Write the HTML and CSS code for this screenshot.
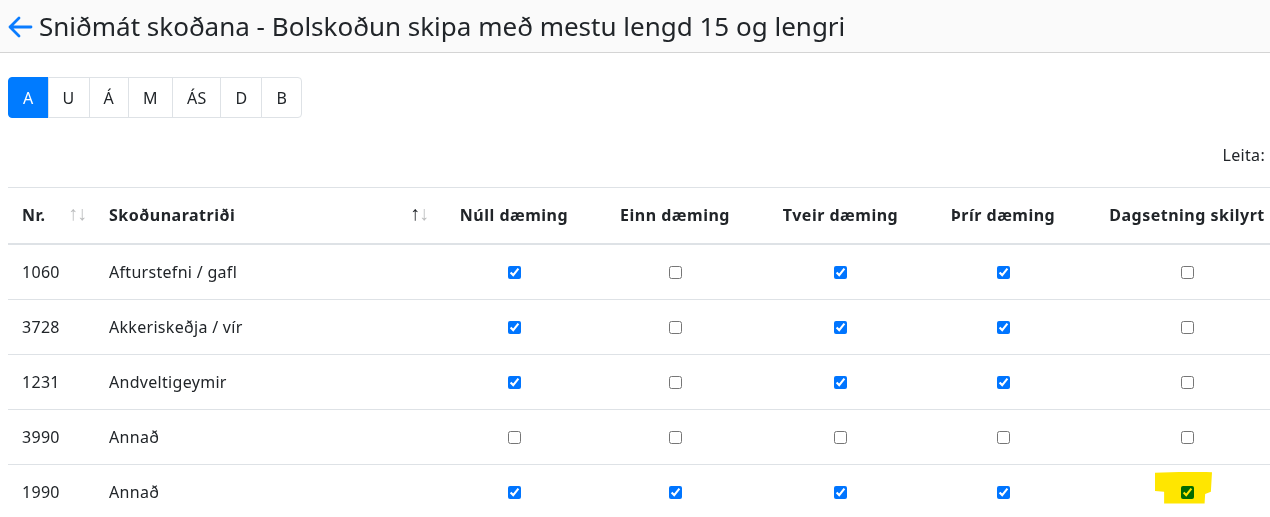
FILE: index.html
```html
<!DOCTYPE html>
<html lang="is">
<head>
<meta charset="utf-8">
<title>Sniðmát skoðana</title>
<link rel="stylesheet" href="styles.css">
</head>
<body>
<header class="topbar">
  <svg class="back" width="26" height="22" viewBox="0 0 26 22" aria-hidden="true">
    <path d="M24 11H3M12 2L3 11l9 9" fill="none" stroke="#0a7cff" stroke-width="2.8" stroke-linecap="round" stroke-linejoin="round"/>
  </svg>
  <h1 class="title">Sniðmát skoðana - Bolskoðun skipa með mestu lengd 15 og lengri</h1>
</header>
<main class="content">
  <div class="btn-group">
    <button class="btn active">A</button>
    <button class="btn">U</button>
    <button class="btn">Á</button>
    <button class="btn">M</button>
    <button class="btn">ÁS</button>
    <button class="btn">D</button>
    <button class="btn">B</button>
  </div>
  <div class="filter">Leita:</div>
  <table class="grid">
    <colgroup>
      <col class="c1"><col class="c2"><col class="c3"><col class="c4"><col class="c5"><col class="c6"><col class="c7">
    </colgroup>
    <thead>
      <tr>
        <th class="sortable">Nr.</th>
        <th class="sortable asc">Skoðunaratriði</th>
        <th class="ctr">Núll dæming</th>
        <th class="ctr">Einn dæming</th>
        <th class="ctr">Tveir dæming</th>
        <th class="ctr">Þrír dæming</th>
        <th class="ctr">Dagsetning skilyrt</th>
      </tr>
    </thead>
    <tbody>
      <tr>
        <td>1060</td><td>Afturstefni / gafl</td>
        <td class="ctr"><input type="checkbox" checked></td>
        <td class="ctr"><input type="checkbox"></td>
        <td class="ctr"><input type="checkbox" checked></td>
        <td class="ctr"><input type="checkbox" checked></td>
        <td class="ctr"><input type="checkbox"></td>
      </tr>
      <tr>
        <td>3728</td><td>Akkeriskeðja / vír</td>
        <td class="ctr"><input type="checkbox" checked></td>
        <td class="ctr"><input type="checkbox"></td>
        <td class="ctr"><input type="checkbox" checked></td>
        <td class="ctr"><input type="checkbox" checked></td>
        <td class="ctr"><input type="checkbox"></td>
      </tr>
      <tr>
        <td>1231</td><td>Andveltigeymir</td>
        <td class="ctr"><input type="checkbox" checked></td>
        <td class="ctr"><input type="checkbox"></td>
        <td class="ctr"><input type="checkbox" checked></td>
        <td class="ctr"><input type="checkbox" checked></td>
        <td class="ctr"><input type="checkbox"></td>
      </tr>
      <tr>
        <td>3990</td><td>Annað</td>
        <td class="ctr"><input type="checkbox"></td>
        <td class="ctr"><input type="checkbox"></td>
        <td class="ctr"><input type="checkbox"></td>
        <td class="ctr"><input type="checkbox"></td>
        <td class="ctr"><input type="checkbox"></td>
      </tr>
      <tr>
        <td>1990</td><td>Annað</td>
        <td class="ctr"><input type="checkbox" checked></td>
        <td class="ctr"><input type="checkbox" checked></td>
        <td class="ctr"><input type="checkbox" checked></td>
        <td class="ctr"><input type="checkbox" checked></td>
        <td class="ctr mark-cell"><input type="checkbox" checked><span class="highlight"></span></td>
      </tr>
    </tbody>
  </table>
</main>
</body>
</html>
```

FILE: styles.css
```css
* { box-sizing: border-box; }
html, body { margin: 0; padding: 0; }
body {
  font-family: "Noto Sans", "Open Sans", sans-serif;
  font-size: 16px;
  line-height: 24px;
  color: #212529;
  background: #fff;
  overflow: hidden;
  letter-spacing: 0.3px;
}
.topbar {
  height: 53px;
  background: #fafafa;
  border-bottom: 1px solid #d4d4d4;
  display: flex;
  align-items: center;
  padding-left: 7px;
  gap: 6px;
}
.back { flex: none; margin-top: 1px; }
.title {
  margin: 0;
  font-size: 26px;
  font-weight: 400;
  line-height: 32px;
  color: #212529;
  letter-spacing: 0;
}
.content { padding: 24px 5px 0 8px; }
.btn-group { display: inline-flex; }
.btn {
  font: inherit;
  letter-spacing: 0.3px;
  height: 41px;
  padding: 0 14px;
  background: #fff;
  color: #212529;
  border: 1px solid #dee2e6;
  margin-left: -1px;
  cursor: pointer;
}
.btn:first-child { border-radius: 4px 0 0 4px; margin-left: 0; }
.btn:last-child { border-radius: 0 4px 4px 0; }
.btn.active { background: #007bff; border-color: #007bff; color: #fff; }
.filter { text-align: right; margin-top: 25px; height: 24px; }
.grid {
  margin-top: 20px;
  border-collapse: collapse;
  table-layout: fixed;
  width: 1282px;
}
.c1 { width: 87px; }
.c2 { width: 342px; }
.c3 { width: 154px; }
.c4 { width: 168px; }
.c5 { width: 163px; }
.c6 { width: 162px; }
.c7 { width: 206px; }
.grid th, .grid td {
  padding: 15px 14px;
  border-top: 1px solid #dee2e6;
  text-align: left;
  vertical-align: middle;
  white-space: nowrap;
}
.grid th {
  font-weight: 700;
  letter-spacing: 0.5px;
  padding-bottom: 16px;
  border-bottom: 2px solid #dee2e6;
}
.grid td { height: 55px; padding-top: 0; padding-bottom: 0; }
.grid td.ctr { padding-bottom: 1px; }
.grid .ctr { text-align: center; }
.sortable { position: relative; }
.sortable::before, .sortable::after {
  position: absolute;
  top: 13px;
  width: 9px;
  text-align: center;
  font-size: 20px;
  line-height: 24px;
  font-weight: 400;
  letter-spacing: 0;
  opacity: 0.3;
}
.sortable::before { content: "\2191"; right: 18px; }
.sortable::after { content: "\2193"; right: 9px; }
.sortable.asc::before { opacity: 1; }
.grid input[type="checkbox"] {
  width: 13px;
  height: 13px;
  margin: 0;
  vertical-align: middle;
  accent-color: #0075ff;
}
.mark-cell { position: relative; }
.highlight {
  position: absolute;
  left: 71px;
  top: 7px;
  width: 57px;
  height: 32px;
  background: #ffe600;
  mix-blend-mode: multiply;
  clip-path: polygon(0 4%, 70% 0, 100% 2%, 98% 63%, 88% 70%, 87% 100%, 16% 100%, 16% 63%, 0 61%);
}
```
